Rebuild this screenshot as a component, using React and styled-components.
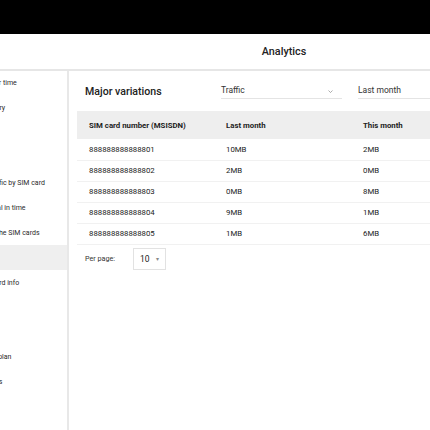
import React from "react";
import styled, { createGlobalStyle } from "styled-components";

const sideItems = [
  "Over time",
  "Query",
  "Top",
  "Top",
  "Traffic by SIM card",
  "Total in time",
  "All the SIM cards",
  "Top",
  "Board info",
  "Top",
  "Top",
  "My plan",
  "Logs",
  "Top",
];
const activeIndex = 7;

const rows = [
  ["888888888888801", "10MB", "2MB"],
  ["888888888888802", "2MB", "0MB"],
  ["888888888888803", "0MB", "8MB"],
  ["888888888888804", "9MB", "1MB"],
  ["888888888888805", "1MB", "6MB"],
];

const App = () => {
  return (
    <>
      <GlobalStyle />
      <Page>
        <TopBar />
        <Header>
          <HeaderTitle>Analytics</HeaderTitle>
        </Header>
        <Body>
          <Sidebar>
            <SideList>
              {sideItems.map((label, i) => (
                <SideItem key={i} $active={i === activeIndex}>
                  {label}
                </SideItem>
              ))}
            </SideList>
          </Sidebar>
          <Main>
            <Toolbar>
              <Title>Major variations</Title>
              <Select>
                <span>Traffic</span>
                <Chevron viewBox="0 0 10 6">
                  <path d="M1 1l4 4 4-4" fill="none" stroke="#777" strokeWidth="1.2" />
                </Chevron>
              </Select>
              <Select>
                <span>Last month</span>
              </Select>
            </Toolbar>
            <Table>
              <thead>
                <tr>
                  <Th>SIM card number (MSISDN)</Th>
                  <Th>Last month</Th>
                  <Th>This month</Th>
                  <Th>Variation</Th>
                </tr>
              </thead>
              <tbody>
                {rows.map((r) => (
                  <tr key={r[0]}>
                    <Td>{r[0]}</Td>
                    <Td>{r[1]}</Td>
                    <Td>{r[2]}</Td>
                    <Td />
                  </tr>
                ))}
              </tbody>
            </Table>
            <Pager>
              <span>Per page:</span>
              <PageBox>
                10 <Caret>▾</Caret>
              </PageBox>
            </Pager>
          </Main>
        </Body>
      </Page>
    </>
  );
};

export default App;

const GlobalStyle = createGlobalStyle`
  html, body {
    margin: 0;
    padding: 0;
    overflow: hidden;
    background: #fff;
  }
  body {
    font-family: Roboto, "Liberation Sans", sans-serif;
    color: #222;
  }
`;

const Page = styled.div`
  width: 568px;
  height: 430px;
  display: flex;
  flex-direction: column;
`;

const TopBar = styled.div`
  height: 34px;
  background: #000;
  flex: none;
`;

const Header = styled.header`
  height: 35px;
  flex: none;
  display: flex;
  align-items: center;
  justify-content: center;
  border-bottom: 2px solid #e6e6e6;
`;

const HeaderTitle = styled.h1`
  margin: 0;
  font-size: 10.8px;
  font-weight: 500;
  color: #222;
`;

const Body = styled.div`
  flex: 1;
  display: flex;
  min-height: 0;
`;

const Sidebar = styled.nav`
  width: 67px;
  flex: none;
  overflow: hidden;
  border-right: 2px solid #e8e8e8;
`;

const SideList = styled.ul`
  list-style: none;
  margin: 0 0 0 -13px;
  padding: 0;
`;

const SideItem = styled.li`
  height: 24.9px;
  display: flex;
  align-items: center;
  white-space: nowrap;
  font-size: 7px;
  margin-left: ${(p) => (p.$active ? "13px" : "0")};
  background: ${(p) => (p.$active ? "#efefef" : "transparent")};
  color: ${(p) => (p.$active ? "transparent" : "#2a2a2a")};
`;

const Main = styled.main`
  flex: 1;
  padding: 0 8px;
`;

const Toolbar = styled.div`
  height: 40px;
  display: flex;
  align-items: center;
  padding-left: 8px;
`;

const Title = styled.h2`
  margin: 0;
  flex: 0 0 136px;
  font-size: 10.6px;
  font-weight: 500;
  color: #222;
`;

const Select = styled.div`
  width: 121px;
  margin-right: 16px;
  height: 17px;
  margin-top: -2px;
  display: flex;
  align-items: center;
  justify-content: space-between;
  border-bottom: 1px solid #e4e4e4;
  font-size: 8.5px;
  color: #333;
`;

const Chevron = styled.svg`
  width: 5px;
  height: 3px;
  margin-right: 9px;
  margin-top: 4px;
`;

const Table = styled.table`
  border-collapse: collapse;
  table-layout: fixed;
  width: 484px;
  font-size: 7.8px;
  color: #222;
`;

const Th = styled.th`
  width: 137px;
  height: 28px;
  padding: 0 0 0 12px;
  text-align: left;
  font-weight: 700;
  background: #eeeeee;
  box-sizing: border-box;
`;

const Td = styled.td`
  height: 21px;
  padding: 0 0 0 12px;
  border-bottom: 1px solid #f1f1f1;
  box-sizing: border-box;
`;

const Pager = styled.div`
  display: flex;
  align-items: center;
  gap: 18px;
  padding: 3px 0 0 8px;
  font-size: 7.2px;
  color: #333;
`;

const PageBox = styled.div`
  width: 33px;
  height: 22px;
  box-sizing: border-box;
  border: 1px solid #e2e2e2;
  display: flex;
  align-items: center;
  padding-left: 6px;
  gap: 6px;
  font-size: 8.5px;
  color: #222;
`;

const Caret = styled.span`
  font-size: 6px;
  color: #888;
`;
